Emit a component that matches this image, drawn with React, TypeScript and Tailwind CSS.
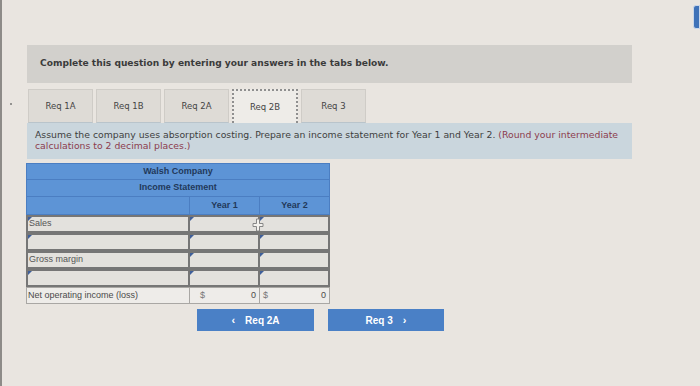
import React from "react";

const TABS = ["Req 1A", "Req 1B", "Req 2A", "Req 2B", "Req 3"];

const ROWS = [
  { label: "Sales", marker: false },
  { label: "", marker: true },
  { label: "Gross margin", marker: false },
  { label: "", marker: true },
];

function Marker() {
  return (
    <span className="absolute left-0 top-0 w-0 h-0 border-t-[4px] border-r-[4px] border-t-[#3f5f9a] border-r-transparent" />
  );
}

// move cursor that sits over the Year 1 / Sales cell
function MoveCursor() {
  return (
    <svg className="absolute z-10 right-[-6px] top-[1px]" width="12" height="14" viewBox="0 0 12 14">
      <path
        d="M4.5 1h3v4.5H11v3H7.5V13h-3V8.5H1v-3h3.5z"
        fill="#f4f2ee"
        stroke="#7d7d7d"
        strokeWidth="0.9"
      />
    </svg>
  );
}

export default function App() {
  return (
    <div className="w-[700px] h-[386px] bg-[#e9e5e0] relative overflow-hidden border-l-[2px] border-[#8d8b88]">
      {/* blue tab peeking at right edge */}
      <div className="absolute right-0 top-[5px] w-[7px] h-[24px] rounded-l-[3px] bg-[#3f72b8] border border-[#c9d7ea]" />
      {/* stray dot */}
      <div className="absolute left-[8px] top-[103px] w-[2px] h-[2px] rounded-full bg-[#777]" />

      <div className="pl-[25px] pt-[45px] w-[630px]">
        {/* question header */}
        <div className="h-[38px] bg-[#d2d0cc] flex items-center pl-[13px]">
          <span className="text-[9.1px] font-bold text-[#3b3b3b] font-['DejaVu_Sans',sans-serif]">
            Complete this question by entering your answers in the tabs below.
          </span>
        </div>

        {/* tabs */}
        <div className="flex gap-[3px] pl-[1px] mt-[6px] h-[34px]">
          {TABS.map((t) =>
            t === "Req 2B" ? (
              <div
                key={t}
                className="w-[66px] bg-[#eeece8] border-x-[2px] border-t-[2px] border-dotted border-[#8f8f8f] flex items-center justify-center text-[8.5px] text-[#444] font-['DejaVu_Sans',sans-serif]"
              >
                {t}
              </div>
            ) : (
              <div
                key={t}
                className="w-[65px] bg-[#dedbd6] border border-[#cfccc7] border-b-[#b9c4cb] flex items-center justify-center text-[8.5px] text-[#444] font-['DejaVu_Sans',sans-serif]"
              >
                {t}
              </div>
            )
          )}
        </div>

        {/* instructions */}
        <div className="bg-[#cad6dd] h-[36px] pl-[8px] pr-[6px] pt-[6px] text-[9.3px] leading-[11px] text-[#3e3e3e] font-['DejaVu_Sans',sans-serif]">
          <div>
            Assume the company uses absorption costing. Prepare an income statement for Year 1 and Year 2.{" "}
            <span className="text-[#8c3c4e]">(Round your intermediate</span>
          </div>
          <div className="text-[#8c3c4e]">calculations to 2 decimal places.)</div>
        </div>

        {/* income statement */}
        <div className="mt-[4px] ml-[-1px] w-[304px] font-['Liberation_Sans',Arial,sans-serif] text-[9px]">
          <div className="bg-[#5d94d6] border border-[#4b7ec2]">
            <div className="h-[16px] flex items-center justify-center font-bold text-[#22395a] border-b border-[#4b7ec2]">
              Walsh Company
            </div>
            <div className="h-[17px] flex items-center justify-center font-bold text-[#22395a] border-b border-[#4b7ec2]">
              Income Statement
            </div>
            <div className="h-[17px] grid grid-cols-[162px_70px_1fr] font-bold text-[#22395a]">
              <div />
              <div className="flex items-center justify-center border-l border-[#4b7ec2]">Year 1</div>
              <div className="flex items-center justify-center border-l border-[#4b7ec2]">Year 2</div>
            </div>
          </div>

          {ROWS.map((r, i) => (
            <div key={i} className="h-[18px] grid grid-cols-[162px_70px_1fr] bg-[#e3e1dd]">
              <div className="relative border-[2px] border-[#767676] border-r-0 flex items-center pl-[1px] text-[#555]">
                {r.marker && <Marker />}
                {r.label}
                {i === 0 && <Marker />}
              </div>
              <div className="relative z-10 border-[2px] border-[#767676] border-r-0">
                <Marker />
                {i === 0 && <MoveCursor />}
              </div>
              <div className="relative border-[2px] border-[#767676]">
                <Marker />
              </div>
            </div>
          ))}
          <div className="h-[17px] grid grid-cols-[162px_70px_1fr] bg-[#eeece9] border border-[#a9a7a4] text-[#4a4a4a]">
            <div className="flex items-center pl-[1px]">Net operating income (loss)</div>
            <div className="flex items-center justify-between px-[10px] pr-[3px] border-l border-[#a9a7a4]">
              <span className="text-[#777]">$</span>
              <span>0</span>
            </div>
            <div className="flex items-center justify-between pl-[3px] pr-[3px] border-l border-[#a9a7a4]">
              <span className="text-[#777]">$</span>
              <span>0</span>
            </div>
          </div>
        </div>

        {/* navigation */}
        <div className="flex gap-[14px] ml-[170px] mt-[5px]">
          <div className="w-[117px] h-[22px] bg-[#4a80c6] flex items-center justify-center gap-[10px] text-white text-[10px] font-bold font-['Liberation_Sans',Arial,sans-serif]">
            <span className="text-[11px]">‹</span>
            <span>Req 2A</span>
          </div>
          <div className="w-[116px] h-[22px] bg-[#4a80c6] flex items-center justify-center gap-[10px] text-white text-[10px] font-bold font-['Liberation_Sans',Arial,sans-serif]">
            <span>Req 3</span>
            <span className="text-[11px]">›</span>
          </div>
        </div>
      </div>
    </div>
  );
}
